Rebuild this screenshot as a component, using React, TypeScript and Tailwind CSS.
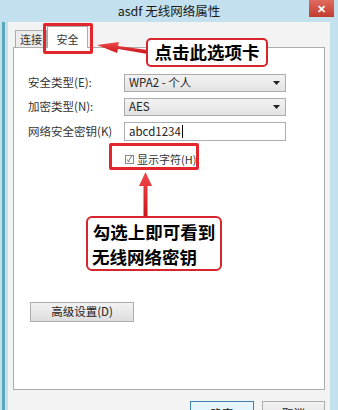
import { ChevronDown } from "lucide-react";

const FONT = { fontFamily: '"Microsoft YaHei", "Noto Sans CJK SC", "Noto Sans", sans-serif' };

function Select({ value }: { value: string }) {
  return (
    <div className="flex h-[18px] w-[162px] items-center justify-between border border-[#acacac] bg-gradient-to-b from-[#f2f2f2] to-[#e3e3e3] pl-[4px] pr-[5px] text-[11.5px] text-[#222]">
      <span>{value}</span>
      <svg width="7" height="4" viewBox="0 0 7 4">
        <path d="M0 0h7L3.5 4z" fill="#222" />
      </svg>
    </div>
  );
}

function Row({ label, children }: { label: string; children: React.ReactNode }) {
  return (
    <div className="flex items-center">
      <span className="w-[96px] text-[11.5px] text-[#333]">{label}</span>
      {children}
    </div>
  );
}

export default function App() {
  return (
    <div
      className="relative h-[410px] w-[338px] overflow-hidden bg-[#c2e0ee]"
      style={FONT}
    >
      {/* title bar */}
      <div className="relative flex h-[22px] items-center justify-center text-[12.5px] text-[#1a1a1a]">
        asdf 无线网络属性
        <div className="absolute right-[4px] top-0 flex h-[17px] w-[25px] items-center justify-center bg-gradient-to-b from-[#e06a5e] to-[#c23a2e] text-[11px] font-bold text-white">
          ✕
        </div>
      </div>

      {/* left teal edge */}
      <div className="absolute left-[2px] top-[22px] h-[388px] w-[3px] bg-[#5aa9b8]" />

      {/* body */}
      <div className="absolute left-[8px] right-[8px] top-[22px] bottom-0 bg-[#f3f3f3] px-[5px]">
        {/* tabs */}
        <div className="flex h-[25px] items-end pl-[2px]">
          <div className="flex h-[17px] w-[32px] items-center justify-center border border-b-0 border-[#acacac] bg-[#ececec] text-[11px] text-[#333]">
            连接
          </div>
          <div className="relative z-10 -mb-px flex h-[22px] w-[41px] items-start justify-center border border-b-0 border-[#acacac] bg-white pt-[4px] text-[11px] text-[#333]">
            安全
          </div>
        </div>

        {/* panel */}
        <div className="h-[343px] border border-[#adadad] bg-white pl-[14px] pt-[26px]">
          <div className="flex flex-col gap-[6px]">
            <Row label="安全类型(E):">
              <Select value="WPA2 - 个人" />
            </Row>
            <Row label="加密类型(N):">
              <Select value="AES" />
            </Row>
            <Row label="网络安全密钥(K)">
              <div className="flex h-[19px] w-[162px] items-center border border-[#abadb3] bg-white pl-[4px] text-[11.5px] text-[#222]">
                abcd1234<span className="ml-px h-[13px] w-px bg-black" />
              </div>
            </Row>
          </div>

          <div className="ml-[97px] mt-[10px] flex items-center gap-[3px] text-[11px] text-[#333]">
            <span className="flex h-[9px] w-[9px] items-center justify-center border border-[#8a8a8a] bg-white text-[8px] leading-none text-[#333]">
              ✓
            </span>
            显示字符(H)
          </div>

          <button className="ml-[2px] mt-[134px] flex h-[20px] w-[104px] items-center justify-center border border-[#acacac] bg-gradient-to-b from-[#f2f2f2] to-[#dedede] text-[11.5px] text-[#222]">
            高级设置(D)
          </button>
        </div>

        {/* bottom buttons */}
        <div className="mt-[11px] flex justify-end gap-[8px] pr-[0px]">
          <div className="flex h-[22px] w-[64px] justify-center border border-[#3c7fb1] bg-gradient-to-b from-[#eaf6fd] to-[#d9f0fc] pt-[3px] text-[11.5px] text-[#222]">
            确定
          </div>
          <div className="flex h-[22px] w-[63px] justify-center border border-[#acacac] bg-gradient-to-b from-[#f2f2f2] to-[#e0e0e0] pt-[3px] text-[11.5px] text-[#222]">
            取消
          </div>
        </div>
      </div>

      {/* annotations */}
      <div className="absolute left-[43px] top-[23px] h-[31px] w-[50px] rounded-[2px] border-[3px] border-[#e3262c]" />
      <div className="absolute left-[109px] top-[143px] h-[27px] w-[90px] rounded-[2px] border-[3px] border-[#e3262c]" />

      <svg className="absolute left-0 top-0" width="338" height="410" viewBox="0 0 338 410">
        <defs>
          <linearGradient id="ar" x1="0" y1="0" x2="0" y2="1">
            <stop offset="0" stopColor="#f04a4a" />
            <stop offset="1" stopColor="#c8141c" />
          </linearGradient>
        </defs>
        {/* arrow to tab */}
        <path d="M148 50 L118 46 L119 42 L97 45 L117 53 L118 49 L148 54 Z" fill="url(#ar)" />
        {/* arrow up to checkbox */}
        <path d="M143.5 218 L143.5 186 L139 186 L145.5 172 L152 186 L147.5 186 L147.5 218 Z" fill="url(#ar)" />
      </svg>

      <div className="absolute left-[146px] top-[38px] flex h-[29px] w-[122px] items-center justify-center rounded-[5px] border-2 border-[#d4262c] bg-white text-[17.5px] font-bold text-black">
        点击此选项卡
      </div>

      <div className="absolute left-[86px] top-[216px] flex h-[55px] w-[136px] flex-col items-center justify-center rounded-[6px] border-2 border-[#d4262c] bg-white text-[17.5px] font-bold leading-[25px] text-black">
        <span>勾选上即可看到</span>
        <span className="self-start pl-[4px]">无线网络密钥</span>
      </div>
    </div>
  );
}
